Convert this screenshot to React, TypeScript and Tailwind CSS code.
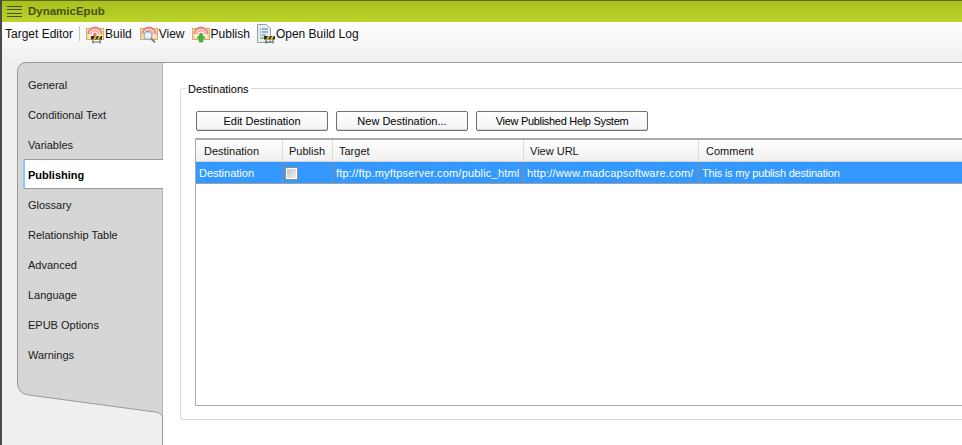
import React from "react";

const font = { fontFamily: '"Liberation Sans", Arial, sans-serif' };

function Rings() {
  return (
    <>
      <rect x="0.5" y="4.5" width="17" height="11" fill="#f3dcaa" stroke="#d2ae70" />
      <path d="M3 11a6 6 0 0 1 12 0v2H3z" fill="#fdf3e4" />
      <path d="M2.5 10a6.5 6.5 0 0 1 13 0" fill="none" stroke="#f08080" strokeWidth="1.8" />
      <path d="M5 10.5a4 4 0 0 1 8 0" fill="none" stroke="#f5a0a0" strokeWidth="1.6" />
      <circle cx="9" cy="10.5" r="1.8" fill="#ee7070" />
    </>
  );
}

function Barrier({ x = 0 }: { x?: number }) {
  return (
    <g transform={`translate(${x} 0)`}>
      <rect x="5" y="12" width="11" height="3.5" fill="#2e2e2e" />
      <path d="M7 15.5l2-3.5h2l-2 3.5zM11 15.5l2-3.5h2l-2 3.5z" fill="#f1c40f" />
      <path d="M7 15.5v4M14 15.5v4M6 18h9" stroke="#666" fill="none" />
    </g>
  );
}

function BuildIcon() {
  return (
    <svg width="18" height="20" viewBox="0 0 18 20" className="shrink-0">
      <Rings />
      <Barrier />
    </svg>
  );
}
function ViewIcon() {
  return (
    <svg width="18" height="20" viewBox="0 0 18 20" className="shrink-0">
      <Rings />
      <circle cx="8" cy="11.5" r="4" fill="#e8eef5" stroke="#9aa6b2" strokeWidth="1.3" />
      <path d="M11 14.5l4 4" stroke="#7b828c" strokeWidth="2" />
    </svg>
  );
}
function PublishIcon() {
  return (
    <svg width="18" height="20" viewBox="0 0 18 20" className="shrink-0">
      <Rings />
      <path d="M9 9.5l4 4.5h-2.2v4H7.2v-4H5z" fill="#35c22f" stroke="#2a8f26" strokeWidth="0.6" />
    </svg>
  );
}
function LogIcon() {
  return (
    <svg width="18" height="20" viewBox="0 0 18 20" className="shrink-0">
      <path d="M0.5 0.5h9l4 4v14h-13z" fill="#e6eef0" stroke="#8fa0a6" />
      <path d="M3 5h1M3 8h1M3 11h1" stroke="#d04040" />
      <path d="M5 5h6M5 8h6M5 11h4" stroke="#4a76c8" />
      <path d="M3 14h5" stroke="#3b9b4a" />
      <Barrier x={2} />
    </svg>
  );
}

const tabs = ["General", "Conditional Text", "Variables", "Publishing", "Glossary", "Relationship Table", "Advanced", "Language", "EPUB Options", "Warnings"];

const cols = [
  { name: "Destination", value: "Destination", w: "w-[87px]", head: "pl-[8px]", cell: "" },
  { name: "Publish", value: "", w: "w-[50px]", head: "pl-[6px]", cell: "" },
  { name: "Target", value: "ftp://ftp.myftpserver.com/public_html", w: "w-[191px]", head: "pl-[6px]", cell: "tracking-[0.2px]" },
  { name: "View URL", value: "http://www.madcapsoftware.com/", w: "w-[175px]", head: "pl-[6px]", cell: "tracking-[0.17px]" },
  { name: "Comment", value: "This is my publish destination", w: "flex-1", head: "pl-[7px]", cell: "tracking-[-0.2px]" },
];

function Btn({ label, w, cls = "" }: { label: string; w: string; cls?: string }) {
  return (
    <div className={`${w} ${cls} h-[20px] flex items-center justify-center rounded-[2px] border border-[#707070] bg-gradient-to-b from-white to-[#f4f4f4] shadow-[inset_0_-1px_0_#d8d8d8] text-[11px] text-black`}>
      {label}
    </div>
  );
}

function ToolItem({ icon, label, cls = "" }: { icon: React.ReactNode; label: string; cls?: string }) {
  return (
    <div className={`flex items-center gap-[1px] ${cls}`}>
      {icon}
      <span>{label}</span>
    </div>
  );
}

export default function App() {
  return (
    <div className="w-[962px] h-[445px] overflow-hidden flex flex-col bg-[#efefef] border-l-2 border-[#4b4b4b]" style={font}>
      <div className="h-[22px] shrink-0 flex items-center gap-[6px] pl-[5px] border-t border-[#5c6a12] bg-gradient-to-b from-[#a9bf1f] to-[#bcd32a]">
        <div className="w-[15px] flex flex-col gap-[2.5px]">
          {[0, 1, 2, 3].map((i) => (
            <div key={i} className="h-[1px] bg-[#46520c]" />
          ))}
        </div>
        <span className="text-[11.5px] font-bold text-[#46520c]">DynamicEpub</span>
      </div>
      <div className="h-[40px] shrink-0 bg-gradient-to-b from-white to-[#efefef]">
        <div className="h-[23px] flex items-center pl-[3px] text-[12px] text-[#101010]">
          <span>Target Editor</span>
          <div className="w-[1px] h-[15px] bg-[#c4c4c4] ml-[6px] mr-[6px]" />
          <div className="flex items-center gap-[8px]">
            <ToolItem icon={<BuildIcon />} label="Build" />
            <ToolItem icon={<ViewIcon />} label="View" />
            <ToolItem icon={<PublishIcon />} label="Publish" cls="-ml-[1px]" />
            <ToolItem icon={<LogIcon />} label="Open Build Log" cls="-ml-[1px]" />
          </div>
        </div>
      </div>
      <div className="flex-1 flex min-h-0 pl-[15px]">
        <div className="relative w-[146px] shrink-0 border-r border-[#999]">
          <svg className="absolute left-0 top-0" width="146" height="360" viewBox="0 0 146 360">
            <path
              d="M0.5 320 V10 Q0.5 0.5 10 0.5 H146 V357 Q146 351 138 350 L12 333 Q0.5 332 0.5 320 Z"
              fill="#d6d6d6"
              stroke="#999"
            />
          </svg>
          <div className="relative pt-[8px] text-[11px] text-[#1a1a1a]">
            {tabs.map((t) =>
              t === "Publishing" ? (
                <div key={t} className="h-[30px] -mt-[1px] mb-[1px] ml-[6px] -mr-[1px] pl-[3px] pt-[2px] flex items-center font-bold text-black bg-white border-b border-[#999] border-t border-l-2 border-l-[#8cc4ff]">
                  {t}
                </div>
              ) : (
                <div key={t} className="h-[30px] pl-[11px] flex items-center">
                  {t}
                </div>
              ),
            )}
          </div>
        </div>
        <div className="flex-1 min-w-0 bg-white border-t border-[#999] pl-[17px] pt-[25px]">
          <div className="relative h-[332px] w-[800px] border border-[#d2dce5] rounded-[3px] pl-[15px] pt-[22px]">
            <span className="absolute left-[5px] -top-[7px] bg-white px-[2px] text-[11px] leading-[14px] text-black">Destinations</span>
            <div className="flex gap-[8px]">
              <Btn label="Edit Destination" w="w-[132px]" />
              <Btn label="New Destination..." w="w-[132px]" />
              <Btn label="View Published Help System" w="w-[172px]" cls="tracking-[-0.3px]" />
            </div>
            <div className="mt-[7px] -ml-[1px] h-[268px] border border-[#ababab] border-t-2 bg-white text-[11px]">
              <div className="flex h-[22px] bg-gradient-to-b from-white to-[#f0f0f0] border-b border-[#d5d5d5] text-[#111]">
                {cols.map((c) => (
                  <div key={c.name} className={`${c.w} ${c.head} shrink-0 flex items-center pt-[1px] border-r border-[#dcdcdc]`}>
                    {c.name}
                  </div>
                ))}
              </div>
              <div className="flex h-[22px] bg-[#3399ff] border-b border-[#a0a0a0] text-white">
                {cols.map((c) => (
                  <div key={c.name} className={`${c.w} ${c.cell} shrink-0 flex items-center pl-[3px] pt-[1px] whitespace-nowrap overflow-hidden border-r border-[#8c8c8c]`}>
                    {c.name === "Publish" ? (
                      <div className="-ml-[1px] w-[13px] h-[13px] border border-[#8e8f8f] bg-gradient-to-br from-[#c0c0c0] to-[#f4f4f4] shadow-[inset_0_0_0_1px_#fff]" />
                    ) : (
                      c.value
                    )}
                  </div>
                ))}
              </div>
            </div>
          </div>
        </div>
      </div>
    </div>
  );
}
